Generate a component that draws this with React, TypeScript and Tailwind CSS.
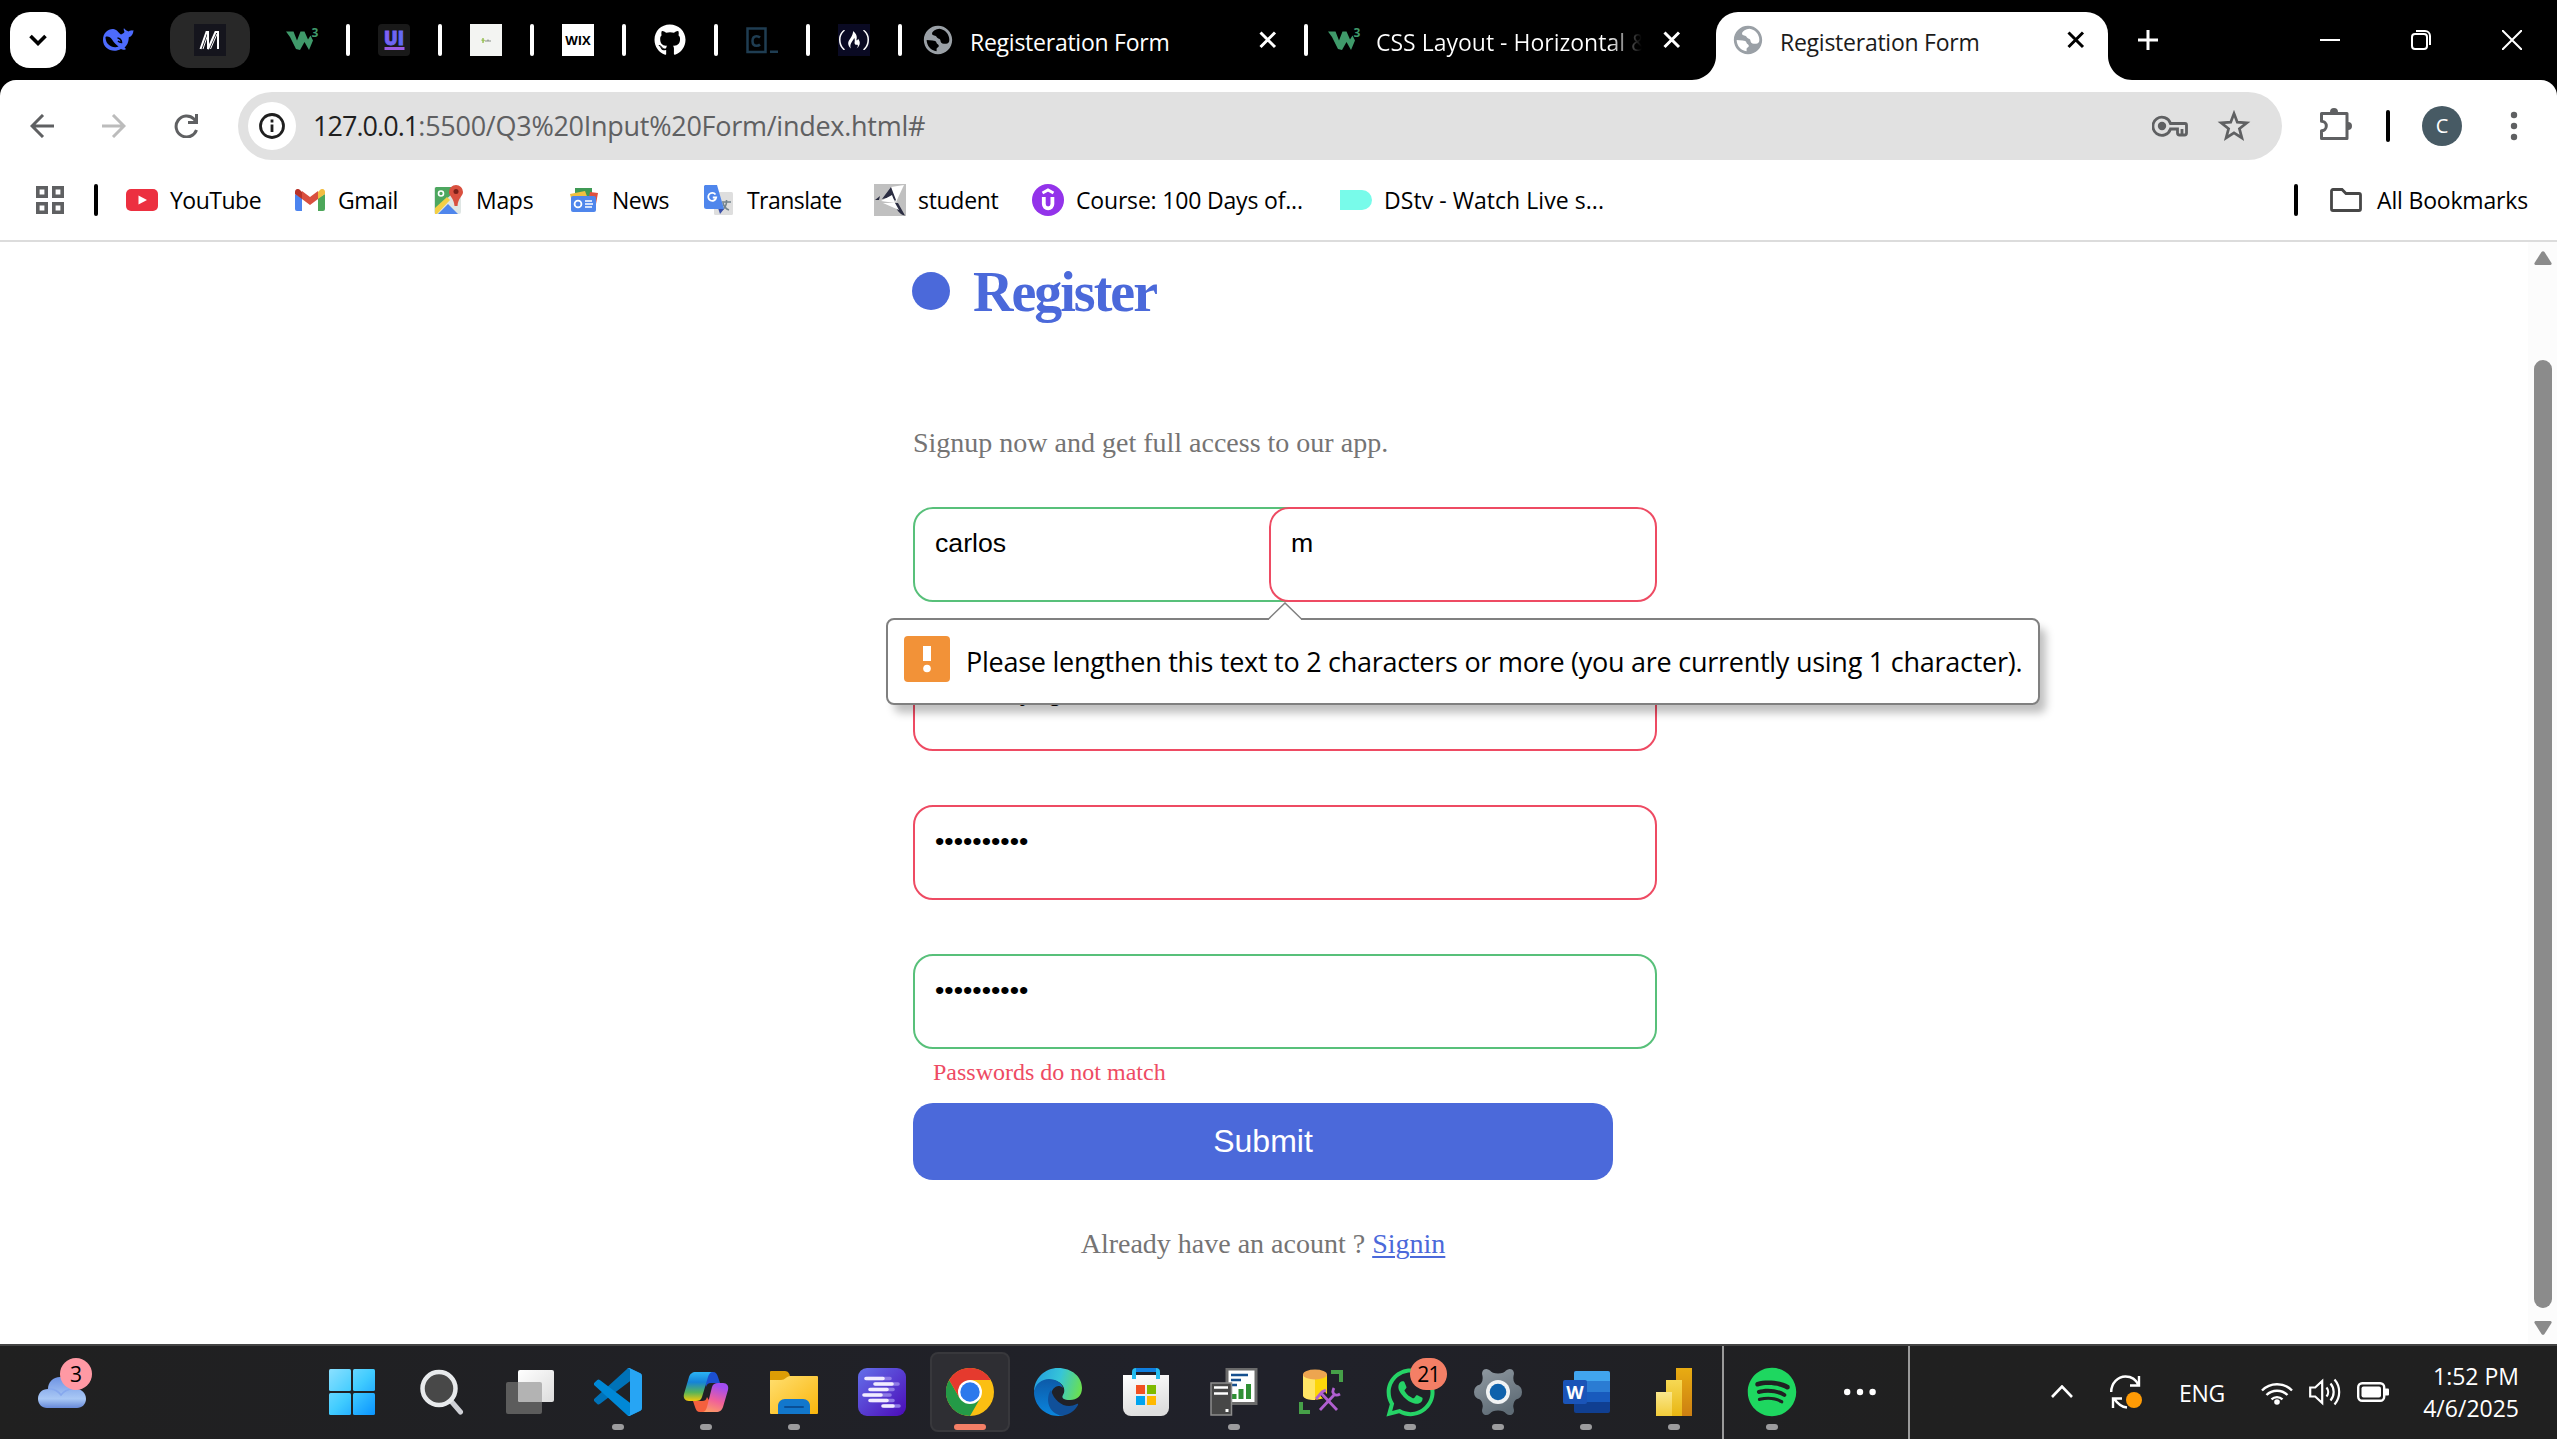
import React from 'react';
import type { ReactNode } from 'react';
import { FaGithub, FaWhatsapp, FaSpotify } from 'react-icons/fa';
import { SiFreecodecamp } from 'react-icons/si';

type IconProps = { className?: string };

/* ---------- favicons ---------- */

const Globe = () => (
  <svg className="size-[34px] shrink-0 -m-[3px]" viewBox="0 0 24 24" fill="#9aa0a6">
    <path d="M12 2C6.48 2 2 6.48 2 12s4.48 10 10 10 10-4.48 10-10S17.52 2 12 2zM11 19.93c-3.95-.49-7-3.85-7-7.93l4.2.4c1.3 0 2.6.5 2.8 1.8.2 1.1 1.6.8 1.6 2 0 1-1.6 1-1.6 2zM13 4.1c-2.4.4-4.9 1.5-5.2 3.2-.2 1.3 1.2 1.6 2.2 1.7 1.2.1.9 1.6 2.2 1.9 1.6.4 1.5 1.3 1.7 2.3.3 1.300 2.300 1.600 3.800 1.500 1.300-.1 2.300-.8 2.300-2.700C20 8 17 4.600 13 4.100z" fillRule="evenodd" />
  </svg>
);

const Whale = () => (
  <svg className="h-[24px] w-[32px]" viewBox="0 0 32 24">
    <path d="M1 12C1 5 5.500 1 11 1c4 .3 5 3.500 8 5.500 1.500-1 2.500-1 3.500-2.500C21.500 2 21.500 1 22 .3c1.500 2.200 3.500 2.700 4.500 3.200 1.500-1 3.500-1 5-1.200-.3 4-2 6.200-4.700 7-.3 5.500-1.800 8.200-4.300 10.200 1.200.7 1.500 1.500 1 2-1.500.7-3.500 0-4.500-.5-8 4.500-18 0-18-9z" fill="#4d6bfe" />
    <path d="M3.500 9c2-1 5 0 6.500 2.500 2 3.500 4 5 6.500 7-3.500 2-8.500 0-11-3C4 13.500 3.500 11 3.500 9z" fill="#000" />
    <path d="M15.500 10c2 0 4 2 4 4.500-1.500 0-2.500-.5-3.500-1.500" fill="none" stroke="#000" strokeWidth="1.600" />
  </svg>
);

const MLogo = () => (
  <svg className="size-8 bg-[#15151d]" viewBox="0 0 32 32" fill="none" stroke="#fff">
    <path d="M6.500 25 12.500 8h1.500v17L21.500 8H24v17" strokeWidth="2" />
    <path d="M9 25 14 10M16.500 25 23 10" strokeWidth="1" />
  </svg>
);

const W3 = () => (
  <svg className="h-[24px] w-8 overflow-visible" viewBox="0 0 32 24" fill="#3f9a6a">
    <path d="M0 3.500h7.500l3.500 9 3.500-9h4l3.500 8 2.500-4 2.500 5-4 9.500-4.500-8-4.500 8-4-1L4 9z" />
    <text x="25.500" y="9" fontSize="12" fontWeight="700" fontFamily="Open Sans, sans-serif">3</text>
  </svg>
);

const UILogo = () => (
  <svg className="size-8" viewBox="0 0 32 32">
    <defs>
      <linearGradient id="uig" x1="0" y1="0" x2="1" y2="0.600">
        <stop offset="0" stopColor="#8b5cf6" />
        <stop offset="1" stopColor="#5b6cf0" />
      </linearGradient>
    </defs>
    <rect width="32" height="32" rx="4" fill="#191919" />
    <text x="6" y="20.500" fontSize="19" fontWeight="800" fontFamily="Open Sans, sans-serif" textLength="20" lengthAdjust="spacingAndGlyphs" fill="url(#uig)" stroke="url(#uig)" strokeWidth="0.800">UI</text>
    <rect x="6.500" y="23" width="20" height="3" fill="#9a5be0" />
  </svg>
);

const PlantLogo = () => (
  <svg className="size-8 bg-[#f3f4f2]" viewBox="0 0 32 32">
    <path d="M13 14v5M11.500 16.500l1.500-1 1.500 1.500" stroke="#9dc25c" strokeWidth="1.500" fill="none" />
    <path d="M15 17h6M18 15.500v1" stroke="#8a8f88" strokeWidth="1.200" />
  </svg>
);

const WixLogo = () => (
  <span className="flex size-8 items-center justify-center bg-white text-[13px] font-bold leading-none text-black">WIX</span>
);

const CLogo = () => (
  <svg className="size-8" viewBox="0 0 32 32" fill="none" stroke="#1f3d52" strokeWidth="2.500">
    <rect x="1.500" y="4.500" width="18" height="23.500" />
    <path d="M14 13.500c-1-1-2-1.300-3.500-1.300-2.500 0-4 2-4 4.800s1.500 4.800 4 4.800c1.500 0 2.500-.3 3.500-1.300M24 27.800h8" />
  </svg>
);

/* ---------- bookmark icons ---------- */

const YouTube = () => (
  <svg className="h-[22px] w-8" viewBox="0 0 32 22">
    <rect width="32" height="22" rx="5" fill="#ec3040" />
    <path d="m12.500 6.500 8.500 4.500-8.500 4.500z" fill="#fff" />
  </svg>
);

const Gmail = () => (
  <svg className="h-[22px] w-[30px]" viewBox="0 0 30 22">
    <path d="M0 5v15a2 2 0 0 0 2 2h5V9z" fill="#4c84ef" />
    <path d="M30 5v15a2 2 0 0 1-2 2h-5V9z" fill="#4da75a" />
    <path d="M23 3v7l7-5V3c0-3-3-4-5-2z" fill="#f2bd42" />
    <path d="M0 3v2l7 5V3L5 1C3-1 0 0 0 3z" fill="#b83228" />
    <path d="M7 2v8l8 6 8-6V2l-8 6z" fill="#d94f3f" />
  </svg>
);

const Maps = () => (
  <svg className="size-8" viewBox="0 0 32 32">
    <rect x="1" y="3" width="27" height="27" rx="2" fill="#dfe6e4" />
    <path d="M3 3h16v7L2 25V4z" fill="#4da75f" />
    <path d="m2 24 12-11 3 3L4 30H2z" fill="#f3cf45" />
    <path d="m5 30 10-10 10 10z" fill="#4f86ec" />
    <path d="M23 1a7 7 0 0 0-7 7c0 4 5 6 5.500 14h3C25 14 30 12 30 8a7 7 0 0 0-7-7z" fill="#d9503f" />
    <circle cx="23" cy="7.500" r="2.500" fill="#7a2019" />
    <circle cx="8" cy="9.500" r="2.500" fill="none" stroke="#fff" strokeWidth="1.600" />
  </svg>
);

const News = () => (
  <svg className="size-8" viewBox="0 0 32 32">
    <rect x="7" y="4" width="17" height="10" fill="#3f9a55" />
    <path d="m2 10 15-3 3 8-16 3z" fill="#f0c040" />
    <path d="m22 8 8 1-2 11-8-2z" fill="#e0503f" />
    <rect x="3" y="12" width="25" height="16" rx="2" fill="#4f86ec" />
    <circle cx="10" cy="20" r="3.400" fill="none" stroke="#fff" strokeWidth="1.800" />
    <path d="M17 17h7M17 20h8M17 23h7" stroke="#fff" strokeWidth="1.700" />
  </svg>
);

const Translate = () => (
  <svg className="size-8" viewBox="0 0 32 32">
    <rect x="11" y="8" width="19" height="23" rx="1.500" fill="#dedede" />
    <path d="M19 18h9M23.500 16v2c0 4-2 6-4.500 8m1-7c1 4 3 6 6 7" stroke="#73838c" strokeWidth="1.600" fill="none" />
    <path d="m15 24 6 1-4 5z" fill="#3b50a8" />
    <path d="M2 1h12l7 24H3.500A2.500 2.500 0 0 1 1 22.500V2z" fill="#4f86ec" />
    <path d="M12.500 10.500a4 4 0 1 0 .7 3H9.800" stroke="#fff" strokeWidth="1.800" fill="none" />
  </svg>
);

const Student = () => (
  <svg className="size-8 bg-[#c0c0c0]" viewBox="0 0 32 32">
    <path d="M17 3 30 1l-8 17-2-2z" fill="#fff" />
    <path d="M17 3 8 15l10-2 3 4 1-1z" fill="#2b2d42" />
    <path d="m1 16 5-4-1 4zM20 19l4 0 7 12.500c-6-1-9-7-11-12.500z" fill="#2b2d42" />
    <path d="m7 17 11-6 3 8zM9 19l12 0 4 7z" fill="#fff" />
  </svg>
);

const Udemy = () => (
  <svg className="size-8" viewBox="0 0 32 32" fill="none" stroke="#fff">
    <circle cx="16" cy="16" r="16" fill="#9333ea" stroke="none" />
    <path d="m10.500 9 5.500-3 5.500 3" strokeWidth="3" />
    <path d="M11.800 13v7a4.300 4.300 0 0 0 8.600 0v-7" strokeWidth="3.800" />
  </svg>
);

/* ---------- taskbar icons ---------- */

const Weather = () => (
  <svg className="h-[31px] w-12" viewBox="0 0 48 31">
    <defs>
      <linearGradient id="cl" x1="0" y1="0" x2="0" y2="1">
        <stop offset="0" stopColor="#6f94e4" />
        <stop offset="0.700" stopColor="#a9c8f5" />
        <stop offset="1" stopColor="#6688d8" />
      </linearGradient>
    </defs>
    <path d="M10 12C10 5 15 0 22 0c6 0 11 4 13 12 8-1 13 4 13 10 0 5-4 9-9 9H9c-5 0-9-4-9-9 0-6 4-10 10-10z" fill="url(#cl)" />
    <path d="M10 12c6-1 11 3 13 6 3-4 7-6 12-6" fill="none" stroke="#86a8ee" strokeWidth="1.500" />
  </svg>
);

const Start = () => (
  <svg className="size-[46px]" viewBox="0 0 46 46">
    <defs>
      <linearGradient id="st" gradientUnits="userSpaceOnUse" x1="0" y1="0" x2="46" y2="46">
        <stop offset="0" stopColor="#8be0ff" />
        <stop offset="0.500" stopColor="#41ccff" />
        <stop offset="1" stopColor="#0a94ff" />
      </linearGradient>
    </defs>
    <g fill="url(#st)">
      <rect width="22" height="22" rx="1.500" />
      <rect x="24" width="22" height="22" rx="1.500" />
      <rect y="24" width="22" height="22" rx="1.500" />
      <rect x="24" y="24" width="22" height="22" rx="1.500" />
    </g>
  </svg>
);

const Search = () => (
  <svg className="size-[46px]" viewBox="0 0 46 46">
    <path d="m32 32 9.500 11" stroke="#cfd0d6" strokeWidth="5" strokeLinecap="round" />
    <circle cx="20" cy="19.500" r="16.500" fill="#484848" stroke="#e8eaec" strokeWidth="4.500" />
  </svg>
);

const TaskView = () => (
  <svg className="h-[44px] w-12" viewBox="0 0 48 44">
    <defs>
      <linearGradient id="tv" x1="0" y1="0" x2="1" y2="1">
        <stop offset="0" stopColor="#fff" />
        <stop offset="1" stopColor="#dcdcdc" />
      </linearGradient>
    </defs>
    <rect x="0" y="12" width="36" height="32" rx="2" fill="#5c5c5c" />
    <rect x="12" width="36" height="32" rx="2" fill="url(#tv)" />
    <path d="M12 12h22a2 2 0 0 1 2 2v18H14a2 2 0 0 1-2-2z" fill="#b3b3b3" />
  </svg>
);

const VSCode = () => (
  <svg className="size-12" viewBox="0 0 100 100">
    <path d="M96.500 10.800 75.900.9a6.200 6.200 0 0 0-7.100 1.200L1.300 63.600a4.200 4.200 0 0 0 0 6.200l5.500 5a4.200 4.200 0 0 0 5.300.2L93.400 13.400a4.100 4.100 0 0 1 6.600 3.300v-.2a6.300 6.300 0 0 0-3.500-5.700z" fill="#0072b8" />
    <path d="M96.500 89.200 75.900 99.100a6.200 6.200 0 0 1-7.100-1.200L1.300 36.400a4.200 4.200 0 0 1 0-6.200l5.500-5a4.200 4.200 0 0 1 5.300-.2L93.400 86.600a4.100 4.100 0 0 0 6.600-3.300v.2a6.300 6.300 0 0 1-3.500 5.700z" fill="#0088d6" />
    <path d="M75.900 99.100a6.200 6.200 0 0 1-7.100-1.200c2.300 2.300 6.200.7 6.200-2.600V4.700c0-3.300-3.900-4.900-6.200-2.600A6.200 6.200 0 0 1 75.900.9l20.600 9.900a6.300 6.300 0 0 1 3.500 5.700v67a6.300 6.300 0 0 1-3.500 5.700z" fill="#27a5f4" />
  </svg>
);

const Copilot = () => (
  <svg className="size-[46px]" viewBox="0 0 46 46">
    <defs>
      <linearGradient id="cp1" x1="0" y1="0" x2="0" y2="1">
        <stop offset="0" stopColor="#2bb4f5" />
        <stop offset="0.350" stopColor="#1583d8" />
        <stop offset="0.700" stopColor="#56b35a" />
        <stop offset="1" stopColor="#f3c80a" />
      </linearGradient>
      <linearGradient id="cp2" x1="0.300" y1="0" x2="0" y2="1">
        <stop offset="0" stopColor="#a34df0" />
        <stop offset="0.500" stopColor="#f0609a" />
        <stop offset="1" stopColor="#ffa45e" />
      </linearGradient>
    </defs>
    <path d="M15 3h15c3 0 4 2 5 5l2 6h-9c-3 0-4 1-5 4l-2-8z" fill="#1b4fd0" />
    <path d="M31 43H17c-3 0-4-2-5-5l-2-6h9c3 0 4-1 5-4l5 8z" fill="#f4603e" />
    <path d="M13 3h17c-3 0-4 2-5 5l-6 20c-1 3-3 4-6 4H6c-4 0-6-3-5-7L6 8c1-3 3-5 7-5z" fill="url(#cp1)" />
    <path d="M33 43H19c3 0 4-2 5-5l5-20c1-3 3-4 6-4h5c4 0 6 3 5 7l-5 17c-1 3-3 5-7 5z" fill="url(#cp2)" />
  </svg>
);

const Explorer = () => (
  <svg className="h-[43px] w-12" viewBox="0 0 48 43">
    <defs>
      <linearGradient id="ex" x1="0" y1="0" x2="1" y2="1">
        <stop offset="0" stopColor="#ffdf70" />
        <stop offset="1" stopColor="#fab50c" />
      </linearGradient>
    </defs>
    <path d="M0 1a1 1 0 0 1 1-1h14c3 0 5 3 5 6v8H0z" fill="#dd9d05" />
    <path d="M0 9h11c4 0 6-4 9-4h27a1 1 0 0 1 1 1v36a1 1 0 0 1-1 1H1a1 1 0 0 1-1-1z" fill="url(#ex)" />
    <path d="M8 43V35c0-4 3-7 7-7h18c4 0 7 3 7 7v8z" fill="#1277cc" />
    <path d="M15 36h18" stroke="#0a4f96" strokeWidth="2" strokeLinecap="round" />
  </svg>
);

const Timeline = () => (
  <svg className="size-12" viewBox="0 0 48 48">
    <defs>
      <linearGradient id="tl" x1="0" y1="0" x2="1" y2="1">
        <stop offset="0" stopColor="#6470ea" />
        <stop offset="1" stopColor="#4b0bb8" />
      </linearGradient>
    </defs>
    <rect width="48" height="48" rx="9" fill="url(#tl)" />
    <g stroke="#8f7be6" strokeWidth="3.600" strokeLinecap="round">
      <path d="M10 10.500h22M18 16h22M14 21.500h21M8 27h24M14 32.500h21M27 38h14" />
    </g>
    <g stroke="#f1ecff" strokeWidth="3.600" strokeLinecap="round">
      <path d="M8 10.500h17M17 16h17M12 21.500h17M6 27h17M12 32.500h17M25 38h10" />
    </g>
  </svg>
);

const Chrome = () => (
  <svg className="size-12" viewBox="-24 -24 48 48">
    <circle r="24" fill="#fbbf12" />
    <path d="M-20.800-12A24 24 0 0 0 0 24L10.400 6h-20.800z" fill="#249a47" />
    <path d="M-20.800-12A24 24 0 0 1 20.800-12H0L-10.400 6z" fill="#e53a2e" />
    <circle r="12" fill="#fff" />
    <circle r="9.700" fill="#2b79ec" />
  </svg>
);

const Edge = () => (
  <svg className="size-12" viewBox="0 0 48 48">
    <defs>
      <linearGradient id="eg" x1="0" y1="0.400" x2="1" y2="0.600">
        <stop offset="0" stopColor="#249fe0" />
        <stop offset="0.500" stopColor="#36c5d8" />
        <stop offset="1" stopColor="#6be04e" />
      </linearGradient>
      <linearGradient id="eb" x1="0" y1="0" x2="0" y2="1">
        <stop offset="0" stopColor="#0d5aa8" />
        <stop offset="1" stopColor="#0a86de" />
      </linearGradient>
    </defs>
    <path d="M0 24C0 10 11 0 24 0c14 0 24 9 24 20 0 8-5 12-12 12-6 0-9-2-7-5 4-6-1-15-13-15C8 12 2 17 0 24z" fill="url(#eg)" />
    <path d="M0 24c1-8 8-13 15-13 7 0 13 4 14 9-5-5-12 0-12 8 0 9 5 17 13 19.300C14 51 0 39 0 24z" fill="url(#eb)" />
    <path d="M17 22c-6 8-3 24 11 25.600 7-.6 13-5 16-10.600.5-1-.3-1.400-1.200-1C33 41 21 36 17 22z" fill="#10509a" />
  </svg>
);

const Store = () => (
  <svg className="size-12" viewBox="0 0 48 48">
    <defs>
      <linearGradient id="sto" x1="0" y1="0" x2="0.300" y2="1">
        <stop offset="0" stopColor="#fff" />
        <stop offset="1" stopColor="#dedede" />
      </linearGradient>
    </defs>
    <path d="M1 7h46v33a8 8 0 0 1-8 8H9a8 8 0 0 1-8-8z" fill="url(#sto)" />
    <path d="M12 11V4a2 2 0 0 1 2-2h20a2 2 0 0 1 2 2v7" fill="none" stroke="#25bdf0" strokeWidth="4" />
    <path d="M14 2h20" stroke="#0f7fe0" strokeWidth="4" />
    <rect x="14" y="17" width="9" height="9" fill="#f25022" />
    <rect x="25" y="17" width="9" height="9" fill="#7fba00" />
    <rect x="14" y="28" width="9" height="9" fill="#00a4ef" />
    <rect x="25" y="28" width="9" height="9" fill="#ffb900" />
  </svg>
);

const Server = () => (
  <svg className="size-12" viewBox="0 0 48 48">
    <rect x="17" y="1" width="29" height="34.500" fill="#fff" stroke="#6b6b6b" strokeWidth="3" />
    <path d="M21 7h17M21 12h10M21 17h6" stroke="#16508f" strokeWidth="2.600" />
    <path d="M24 31v-5M31 31v-10M38.500 31V16" stroke="#2f8f33" strokeWidth="5" />
    <rect x="1" y="15" width="20.500" height="32" fill="#474747" stroke="#8d8d8d" strokeWidth="1.500" />
    <path d="M4 19.500h14M4 25.500h14" stroke="#fff" strokeWidth="2.600" />
    <rect x="15.500" y="41" width="3" height="3" fill="#fff" />
  </svg>
);

const Database = () => (
  <svg className="size-12" viewBox="0 0 48 48">
    <path d="M5 6v21c0 6 24 6 24 0V6z" fill="#fcd60a" />
    <path d="M5 6v21c0 4 6 5 12 5V6z" fill="#ffe566" />
    <ellipse cx="17" cy="6.500" rx="12" ry="5" fill="#eda550" />
    <path d="M33 4h10v10M3 34v10h9" fill="none" stroke="#46a048" strokeWidth="4" />
    <g stroke="#202128" strokeWidth="6" fill="none">
      <path d="m24 25 15 17M22 42l16-17" />
    </g>
    <g stroke="#b05fd0" strokeWidth="2.800" fill="none">
      <path d="m23 25 16 17M22 42l14-15M18 31l6-7 4-2" />
      <path d="M36 20c-3 5 1 9 6 6" />
    </g>
  </svg>
);

const Gear = () => (
  <svg className="size-12" viewBox="-24 -24 48 48">
    <defs>
      <linearGradient id="ge" x1="0" y1="0" x2="0.500" y2="1">
        <stop offset="0" stopColor="#929ba3" />
        <stop offset="1" stopColor="#5f6c76" />
      </linearGradient>
    </defs>
    <path d="M-14-22.500 Q-11-24-8-21.500 Q-6-18.500 0-18.500 Q6-18.500 8-21.500 Q11-24 14-22.500 Q17-20 15.500-16 Q14.500-11 18-7.500 Q24-6 24 0 Q24 6 18 7.500 Q14.500 11 15.500 16 Q17 20 14 22.500 Q11 24 8 21.500 Q6 18.500 0 18.500 Q-6 18.500-8 21.500 Q-11 24-14 22.500 Q-17 20-15.500 16 Q-14.500 11-18 7.500 Q-24 6-24 0 Q-24-6-18-7.500 Q-14.500-11-15.500-16 Q-17-20-14-22.500z" fill="url(#ge)" />
    <circle r="12" fill="#f1f3f4" />
    <circle r="8.300" fill="#0f62ac" />
  </svg>
);

const Word = () => (
  <svg className="size-12" viewBox="0 0 48 48">
    <rect x="12" y="3" width="36" height="42" rx="2" fill="#103f91" />
    <path d="M12 5a2 2 0 0 1 2-2h32a2 2 0 0 1 2 2v8H12z" fill="#41a5ee" />
    <path d="M12 13h36v11H12z" fill="#2b7cd3" />
    <path d="M12 24h36v10H12z" fill="#185abd" />
    <rect x="1" y="12" width="24" height="24" rx="2" fill="#1a54b8" />
    <text x="13" y="30.500" fontSize="18" fontWeight="700" textAnchor="middle" fontFamily="Open Sans, sans-serif" fill="#fff">W</text>
  </svg>
);

const PowerBI = () => (
  <svg className="size-12" viewBox="0 0 48 48">
    <defs>
      <linearGradient id="pb1" x1="0" y1="0" x2="0" y2="1">
        <stop offset="0" stopColor="#e8ac12" />
        <stop offset="1" stopColor="#cc7f12" />
      </linearGradient>
      <linearGradient id="pb2" x1="0" y1="0" x2="0" y2="1">
        <stop offset="0" stopColor="#f6d854" />
        <stop offset="1" stopColor="#e8b512" />
      </linearGradient>
      <linearGradient id="pb3" x1="0" y1="0" x2="0" y2="1">
        <stop offset="0" stopColor="#fae78c" />
        <stop offset="1" stopColor="#f2cc3a" />
      </linearGradient>
    </defs>
    <rect x="26" width="16" height="48" fill="url(#pb1)" />
    <rect x="16" y="12" width="16" height="36" fill="url(#pb2)" />
    <rect x="6" y="24" width="16" height="24" fill="url(#pb3)" />
  </svg>
);

const WhatsApp = () => (
  <span className="relative flex size-12">
    <FaWhatsapp className="size-[55px] -m-[3.500px] shrink-0 text-[#25d366]" />
    <span className="absolute -top-[10px] left-[24px] flex h-8 w-[37px] items-center justify-center rounded-full bg-[#f47f66] text-[21px] leading-none tracking-[-0.800px] text-black">21</span>
  </span>
);

const Spotify = () => (
  <span className="flex size-12 items-center justify-center rounded-full">
    <FaSpotify className="size-[50px] -m-px shrink-0 text-[#1ed760]" />
  </span>
);

const Dots = () => (
  <svg className="h-3 w-8" viewBox="0 0 32 12" fill="#fff">
    <circle cx="3.200" cy="6" r="3.200" />
    <circle cx="16" cy="6" r="3.200" />
    <circle cx="28.600" cy="6" r="3.200" />
  </svg>
);

/* ---------- tab strip ---------- */

const Sep = ({ className = '' }: IconProps) => <i className={`h-8 w-1 shrink-0 rounded-[2px] ${className}`} />;

const Cross = ({ className = '' }: IconProps) => (
  <svg className={`size-[18px] shrink-0 ${className}`} viewBox="0 0 18 18" fill="none" stroke="currentColor" strokeWidth="3">
    <path d="M1.500 1.500 16 16M16 1.500 1.500 16" />
  </svg>
);

const pinned: ReactNode[] = [
  <UILogo />,
  <PlantLogo />,
  <WixLogo />,
  <FaGithub className="size-8 text-white" />,
  <CLogo />,
  <span className="flex size-8 items-center justify-center bg-[#0a0a23]"><SiFreecodecamp className="size-[30px] text-white" /></span>,
];

const TabStrip = () => (
  <header className="flex h-20 shrink-0 items-center bg-black pl-[10px] text-white">
    <button className="flex h-14 w-14 items-center justify-center rounded-[20px] bg-white">
      <svg className="h-[12px] w-[18px]" viewBox="0 0 18 12" fill="none" stroke="#000" strokeWidth="3.600">
        <path d="m1.500 2 7.500 7.500L16.500 2" />
      </svg>
    </button>
    <span className="ml-9 flex"><Whale /></span>
    <span className="ml-9 flex h-14 w-20 items-center justify-center rounded-[20px] bg-[#282828]"><MLogo /></span>
    <span className="ml-9 mr-7 flex"><W3 /></span>
    {pinned.map((icon, i) => (
      <React.Fragment key={i}>
        <Sep className="bg-white" />
        <span className="mx-7 flex size-8">{icon}</span>
      </React.Fragment>
    ))}
    <Sep className="bg-white" />
    <div className="ml-[22px] flex w-[380px] items-center">
      <Globe />
      <span className="ml-[18px] w-[289px] whitespace-nowrap pt-[3px] text-[23px] leading-8 tracking-[-0.250px]">Registeration Form</span>
      <Cross />
    </div>
    <Sep className="bg-white" />
    <div className="ml-5 flex w-[388px] items-center">
      <W3 />
      <span className="ml-4 w-[274px] whitespace-nowrap bg-linear-to-r from-white from-85% to-transparent to-97% bg-clip-text pt-[3px] text-[23px] leading-8 text-transparent">CSS Layout - Horizontal &amp;</span>
      <Cross className="ml-[13px]" />
    </div>
    <div className="flex h-[68px] items-end self-end">
      <svg className="-ml-6 size-6" viewBox="0 0 24 24" fill="#fff"><path d="M24 0v24H0C13 24 24 13 24 0z" /></svg>
      <div className="flex h-[68px] w-[392px] items-center rounded-t-[22px] bg-white pb-3 pl-[18px] text-[#1b1b1b]">
        <Globe />
        <span className="ml-[18px] w-[287px] whitespace-nowrap pt-[3px] text-[23px] leading-8 tracking-[-0.250px]">Registeration Form</span>
        <Cross className="text-black" />
      </div>
      <svg className="size-6" viewBox="0 0 24 24" fill="#fff"><path d="M0 0v24h24C11 24 0 13 0 0z" /></svg>
    </div>
    <svg className="ml-[6px] size-5 shrink-0" viewBox="0 0 20 20" stroke="#fff" strokeWidth="3"><path d="M10 0v20M0 10h20" /></svg>
    <div className="ml-auto mr-[35px] flex items-center gap-[71px]">
      <svg className="size-5" viewBox="0 0 20 20" stroke="#fff" strokeWidth="2"><path d="M0 10h20" /></svg>
      <svg className="size-5" viewBox="0 0 20 20" fill="none" stroke="#fff" strokeWidth="2">
        <rect x="1" y="4" width="15" height="15" rx="3" />
        <path d="M5 1h9a5 5 0 0 1 5 5v9" />
      </svg>
      <svg className="size-5" viewBox="0 0 20 20" stroke="#fff" strokeWidth="2"><path d="m0 0 20 20M20 0 0 20" /></svg>
    </div>
  </header>
);

/* ---------- address bar ---------- */

const Toolbar = () => (
  <div className="flex h-[92px] shrink-0 items-center bg-black">
    <div className="flex h-full w-full items-center rounded-t-[16px] bg-white pl-[30px] text-[#5f6062]">
      <svg className="size-6" viewBox="0 0 24 24" fill="none" stroke="currentColor" strokeWidth="3"><path d="M24 12H2M13 1 2 12l11 11" /></svg>
      <svg className="ml-12 size-6 text-[#bcbcbc]" viewBox="0 0 24 24" fill="none" stroke="currentColor" strokeWidth="3"><path d="M0 12h22M11 1l11 11-11 11" /></svg>
      <svg className="ml-12 size-6" viewBox="0 0 24 24" fill="none" stroke="currentColor" strokeWidth="3"><path d="M22.500 16A10.500 10.500 0 1 1 20 5l2.500 3M22.500 0v8.500H14" /></svg>
      <div className="ml-10 flex h-[68px] w-[2044px] items-center rounded-full bg-[#e1e1e1] pl-[10px]">
        <span className="flex size-12 items-center justify-center rounded-full bg-white">
          <svg className="size-[26px]" viewBox="0 0 26 26" fill="none" stroke="#1f1f1f" strokeWidth="2.800">
            <circle cx="13" cy="13" r="11.500" />
            <path d="M13 11.500V19M13 6.500v3" />
          </svg>
        </span>
        <span className="ml-[17px] whitespace-nowrap text-[27px] leading-9 tracking-[-0.270px]">
          <span className="tracking-[-0.950px] text-[#1f1f1f]">127.0.0.1</span>:5500/Q3%20Input%20Form/index.html#
        </span>
        <svg className="ml-auto h-[22px] w-9" viewBox="0 0 36 22" fill="none" stroke="currentColor" strokeWidth="2.800">
          <path d="M18.500 8.500H33a1.500 1.500 0 0 1 1.500 1.500v8a2 2 0 0 1-2 2h-5a2 2 0 0 1-2-2v-4H18.500A9 9 0 1 1 18.500 8.500zM30 14v5" />
          <circle cx="10" cy="11" r="4.200" fill="currentColor" stroke="none" />
        </svg>
        <svg className="ml-[29px] mr-[31px] size-[34px]" viewBox="0 0 34 34" fill="none" stroke="currentColor" strokeWidth="2.700">
          <path d="m17 4.500 3.300 8.700 9.500.600-7.400 5.900 2.500 9.300-7.900-5.200L9.100 29l2.500-9.300-7.400-5.900 9.500-.6z" />
        </svg>
      </div>
      <svg className="ml-[38px] mb-1 h-8 w-8" viewBox="0 0 32 32" fill="none" stroke="currentColor" strokeWidth="3">
        <path d="M1.500 5.500H27v25H1.500v-7.700a4.500 4.500 0 0 0 0-9.600z" strokeLinejoin="round" />
        <path d="M10 4a4 4 0 0 1 8 0zM28 14a4 4 0 0 1 0 8z" fill="currentColor" stroke="none" />
      </svg>
      <Sep className="ml-[34px] bg-black" />
      <span className="ml-8 flex size-10 items-center justify-center rounded-full bg-[#475a64] text-[20px] leading-none text-white">C</span>
      <svg className="ml-[48px] h-[30px] w-2" viewBox="0 0 8 30" fill="currentColor">
        <circle cx="4" cy="4" r="3.200" />
        <circle cx="4" cy="15" r="3.200" />
        <circle cx="4" cy="26" r="3.200" />
      </svg>
    </div>
  </div>
);

/* ---------- bookmarks ---------- */

const Bookmark = ({ icon, children, className }: { icon: ReactNode; children: ReactNode; className: string }) => (
  <a className={`flex shrink-0 items-center whitespace-nowrap text-[23px] leading-8 ${className}`}>
    <span className="flex">{icon}</span>
    <span className="-mt-px">{children}</span>
  </a>
);

const Bookmarks = () => (
  <nav className="flex h-[70px] shrink-0 items-center border-b-2 border-[#dcdcdc] pb-[12px] pl-9 pr-[29px] text-black">
    <svg className="size-7" viewBox="0 0 28 28" fill="none" stroke="#5f6062" strokeWidth="3.600">
      <path d="M1.800 1.800h8.400v8.400H1.800zM17.800 1.800h8.400v8.400h-8.400zM1.800 17.800h8.400v8.400H1.800zM17.800 17.800h8.400v8.400h-8.400z" />
    </svg>
    <Sep className="ml-[30px] mr-7 bg-black" />
    <Bookmark icon={<YouTube />} className="w-[169px] gap-3 tracking-[-0.500px]">YouTube</Bookmark>
    <Bookmark icon={<Gmail />} className="w-[138px] gap-[13px] tracking-[-0.500px]">Gmail</Bookmark>
    <Bookmark icon={<Maps />} className="w-[135px] gap-[11px] tracking-[-0.300px]">Maps</Bookmark>
    <Bookmark icon={<News />} className="w-[135px] gap-3 tracking-[-0.500px]">News</Bookmark>
    <Bookmark icon={<Translate />} className="w-[171px] gap-3 tracking-[-0.550px]">Translate</Bookmark>
    <Bookmark icon={<Student />} className="w-[158px] gap-3 tracking-[-0.300px]">student</Bookmark>
    <Bookmark icon={<Udemy />} className="w-[308px] gap-3 tracking-[-0.180px]">Course: 100 Days of...</Bookmark>
    <Bookmark icon={<span className="h-5 w-8 rounded-l-[2px] rounded-r-full bg-[#78fbea]" />} className="gap-3 tracking-[0.050px]">DStv - Watch Live s...</Bookmark>
    <Sep className="ml-auto bg-black" />
    <Bookmark
      className="ml-8 gap-[15px] tracking-[-0.180px]"
      icon={
        <svg className="h-6 w-8" viewBox="0 0 32 24" fill="none" stroke="#474747" strokeWidth="2.800">
          <path d="M1.500 3a1.500 1.500 0 0 1 1.500-1.500h9L16 5.500h13A1.500 1.500 0 0 1 30.500 7v14a1.500 1.500 0 0 1-1.500 1.500H3A1.500 1.500 0 0 1 1.500 21z" />
        </svg>
      }
    >
      All Bookmarks
    </Bookmark>
  </nav>
);

/* ---------- page ---------- */

const Field = ({ value, className }: { value: string; className: string }) => (
  <div className={`h-[95px] shrink-0 overflow-hidden rounded-[20px] border-2 bg-white pl-5 pt-[18px] font-['Liberation_Sans',sans-serif] text-[26.670px] leading-8 text-black ${className}`}>
    {value}
  </div>
);

const Tooltip = () => (
  <div className="absolute left-[-27px] top-[111px] flex h-[87px] w-[1154px] rounded-[8px] border-2 border-[#808080] bg-white pl-[16px] pt-[16px] shadow-[7px_9px_9px_-1px_rgba(0,0,0,0.250)]">
    <svg className="absolute -top-[18px] left-[379px] h-[19px] w-9" viewBox="0 0 36 19">
      <path d="M2 16 18 1l16 15v3H2z" fill="#fff" />
      <path d="M1 17.500 18 1l17 16.500" fill="none" stroke="#808080" strokeWidth="1.500" />
    </svg>
    <svg className="size-[46px] shrink-0" viewBox="0 0 46 46">
      <rect width="46" height="46" rx="4" fill="#f29238" />
      <path d="M19 10h8v15h-8z" fill="#fff" />
      <circle cx="23" cy="32.500" r="3.800" fill="#fff" />
    </svg>
    <p className="ml-[16px] mt-[8px] whitespace-nowrap font-['Open_Sans',sans-serif] text-[27px] leading-9 tracking-[-0.260px] text-black">
      Please lengthen this text to 2 characters or more (you are currently using 1 character).
    </p>
  </div>
);

const Page = () => (
  <main className="flex min-h-0 flex-1 bg-white">
    <div className="flex flex-1 justify-start pl-[913px]">
      <form className="flex w-[744px] flex-col pt-[19px] font-['Liberation_Serif',serif] text-[28px] leading-8 text-[#757474]">
        <h1 className="-ml-px flex h-[60px] items-center text-[56px] font-bold leading-[60px] tracking-[-2px] text-[#4b69da]">
          <i className="mr-[23px] size-[38px] rounded-full bg-[#4b69da]" />
          <span className="pt-[2px]">Register</span>
        </h1>
        <p className="mt-[106px]">Signup now and get full access to our app.</p>
        <div className="relative mt-12 flex">
          <Field value="carlos" className="w-[400px] border-[#58c07a]" />
          <Field value="m" className="-ml-[44px] w-[388px] border-[#ee4b63]" />
          <Tooltip />
        </div>
        <Field value="carloskyag" className="mt-[54px] border-[#ee4b63]" />
        <Field value="••••••••••" className="mt-[54px] border-[#ee4b63]" />
        <Field value="••••••••••" className="mt-[54px] border-[#58c07a]" />
        <p className="ml-5 mt-[11px] text-2xl leading-6 text-[#ee4b63]">Passwords do not match</p>
        <button type="button" className="mt-[19px] h-[77px] w-[700px] rounded-[20px] bg-[#4b69da] pb-[2px] font-['Liberation_Sans',sans-serif] text-[32px] leading-8 text-white">Submit</button>
        <p className="mt-12 w-[700px] text-center">
          Already have an acount ? <a className="text-[#4b69da] underline decoration-2 underline-offset-[3px]">Signin</a>
        </p>
      </form>
    </div>
    <aside className="flex w-[29px] flex-col items-center bg-[#fcfcfc] pb-[9px] pt-[9px]">
      <svg className="h-[14px] w-[18px]" viewBox="0 0 18 14" fill="#8b8b8b"><path d="M7.500 1a2 2 0 0 1 3 0L17.500 12a1.500 1.500 0 0 1-1 2h-15a1.500 1.500 0 0 1-1-2z" /></svg>
      <i className="mb-[13px] mt-[95px] w-[18px] flex-1 rounded-full bg-[#8b8b8b]" />
      <svg className="h-[14px] w-[18px]" viewBox="0 0 18 14" fill="#8b8b8b"><path d="M7.500 13a2 2 0 0 0 3 0L17.500 2a1.500 1.500 0 0 0-1-2h-15a1.500 1.500 0 0 0-1 2z" /></svg>
    </aside>
  </main>
);

/* ---------- taskbar ---------- */

type AppState = 'none' | 'dot' | 'active';

const apps: [string, ReactNode, AppState][] = [
  ['Search', <Search />, 'none'],
  ['Task view', <TaskView />, 'none'],
  ['Code', <VSCode />, 'dot'],
  ['Copilot', <Copilot />, 'dot'],
  ['Explorer', <Explorer />, 'dot'],
  ['Timeline', <Timeline />, 'none'],
  ['Chrome', <Chrome />, 'active'],
  ['Edge', <Edge />, 'none'],
  ['Store', <Store />, 'none'],
  ['Server', <Server />, 'dot'],
  ['Database', <Database />, 'none'],
  ['WhatsApp', <WhatsApp />, 'dot'],
  ['Settings', <Gear />, 'dot'],
  ['Word', <Word />, 'dot'],
  ['Power BI', <PowerBI />, 'dot'],
];

const TaskIcon = ({ icon, state }: { icon: ReactNode; state: AppState }) => (
  <div className="flex w-[88px] shrink-0 justify-center pt-[6px]">
    <div className={`flex h-20 w-20 flex-col items-center rounded-[8px] ${state === 'active' ? 'border-2 border-[#38383c] bg-[#2e2e33]' : 'border-2 border-transparent'}`}>
      <span className="mt-[13px] flex h-[50px] items-center">{icon}</span>
      {state === 'dot' && <i className="mt-[7px] h-[6px] w-3 rounded-full bg-[#9c9c9e]" />}
      {state === 'active' && <i className="mt-[7px] h-[6px] w-8 rounded-full bg-[#f47f66]" />}
    </div>
  </div>
);

const Taskbar = () => (
  <footer className="flex h-[95px] shrink-0 border-t-2 border-[#444] bg-linear-to-r from-[#202020] via-[#20212a] via-50% to-[#202020] to-75% text-white">
    <div className="relative flex w-[308px] items-start pl-[38px] pt-[31px]">
      <Weather />
      <span className="absolute left-[60px] top-3 flex size-8 items-center justify-center rounded-full bg-[#ff99a4] text-[21px] leading-none text-black">3</span>
    </div>
    <TaskIcon icon={<Start />} state="none" />
    <span className="w-[2px]" />
    {apps.map(([name, icon, state]) => (
      <TaskIcon key={name} icon={icon} state={state} />
    ))}
    <i className="ml-[4px] w-[2px] bg-[#9a9a9a]" />
    <span className="w-[4px]" />
    <TaskIcon icon={<Spotify />} state="dot" />
    <TaskIcon icon={<Dots />} state="none" />
    <i className="ml-1 w-[2px] bg-[#9a9a9a]" />
    <div className="ml-auto mr-[38px] flex items-center pb-[3px] text-[23px] leading-8">
      <svg className="h-[13px] w-[22px]" viewBox="0 0 22 13" fill="none" stroke="#fff" strokeWidth="2.600"><path d="m1 12 10-10.500L21 12" /></svg>
      <svg className="ml-[37px] mt-px h-[34px] w-8" viewBox="0 0 32 34" fill="none" stroke="#fff" strokeWidth="2.400">
        <path d="M1.200 17C1.200 8 8 1.500 15.500 1.500c6 0 10.500 3 13 8.500M29 1v9.500h-9M17 32.500c-5-.5-9-3-13-9M3 33v-9.500h9" />
        <circle cx="24" cy="25" r="8" fill="#ff9b05" stroke="none" />
      </svg>
      <span className="ml-[37px] mt-[4px] tracking-[-0.300px]">ENG</span>
      <svg className="ml-[36px] mt-[2px] h-[26px] w-8" viewBox="0 0 32 26" fill="none" stroke="#fff" strokeWidth="2.400">
        <path d="M1 11.500a21 21 0 0 1 30 0M5.500 16a15 15 0 0 1 21 0M10.500 20.300a8 8 0 0 1 11 0" />
        <circle cx="16" cy="23" r="2.800" fill="#fff" stroke="none" />
      </svg>
      <svg className="ml-4 mt-[2px] h-7 w-8" viewBox="0 0 32 28" fill="none" stroke="#fff" strokeWidth="2.200">
        <path d="M1.200 9.500h5l7-6.500v22l-7-6.500h-5zM17.500 9.500a7 7 0 0 1 0 9M21.500 5.500a13 13 0 0 1 0 17M25.500 1.500a19 19 0 0 1 0 25" />
      </svg>
      <svg className="ml-4 mt-[2px] h-5 w-8" viewBox="0 0 32 20">
        <rect x="1.200" y="1.200" width="26" height="17.600" rx="4" fill="none" stroke="#fff" strokeWidth="2.400" />
        <rect x="4.500" y="4.500" width="19.500" height="11" rx="2" fill="#fff" />
        <path d="M28 6.500h3a1 1 0 0 1 1 1v5a1 1 0 0 1-1 1h-3z" fill="#fff" />
      </svg>
      <div className="ml-8 mt-px flex w-[98px] flex-col items-end whitespace-nowrap">
        <span>1:52 PM</span>
        <span>4/6/2025</span>
      </div>
    </div>
  </footer>
);

export default function App() {
  return (
    <div className="flex h-[1439px] w-[2557px] flex-col overflow-hidden bg-white font-['Open_Sans',sans-serif]">
      <TabStrip />
      <Toolbar />
      <Bookmarks />
      <Page />
      <Taskbar />
    </div>
  );
}
